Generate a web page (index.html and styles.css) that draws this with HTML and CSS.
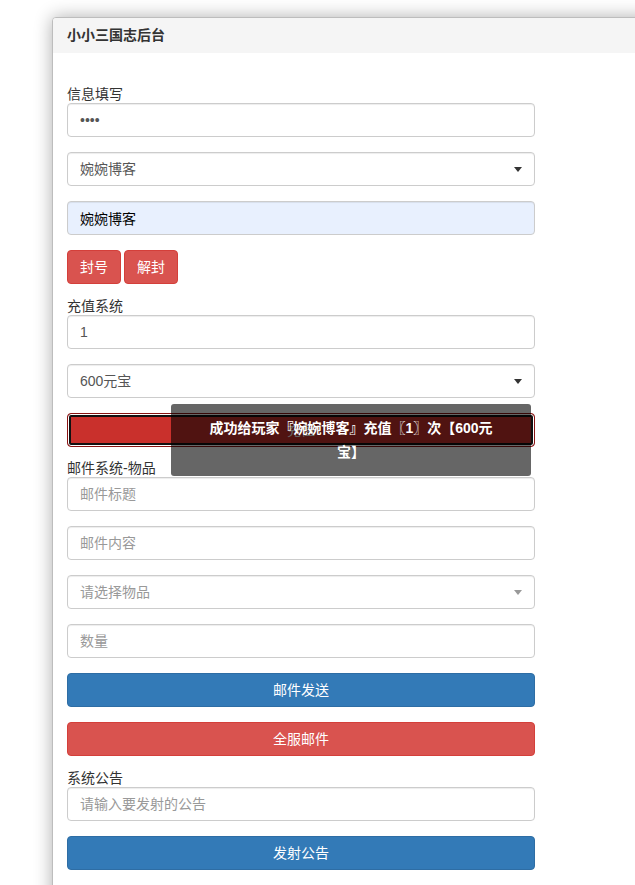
FILE: index.html
```html
<!DOCTYPE html>
<html lang="zh-CN">
<head>
<meta charset="utf-8">
<title>小小三国志后台</title>
<link rel="stylesheet" href="styles.css">
</head>
<body>
<div class="panel">
  <div class="panel-heading">小小三国志后台</div>
  <div class="panel-body">
    <label class="label">信息填写</label>
    <input class="control gap15" type="password" value="1234">
    <div class="select-wrap gap15">
      <select class="control"><option>婉婉博客</option></select>
    </div>
    <input class="control autofill gap15" type="text" value="婉婉博客">
    <div class="btn-row">
      <button class="btn danger">封号</button>
      <button class="btn danger">解封</button>
    </div>

    <label class="label">充值系统</label>
    <input class="control gap15" type="text" value="1">
    <div class="select-wrap gap15">
      <select class="control"><option>600元宝</option></select>
    </div>
    <div class="charge-wrap">
      <button class="btn danger block focused">充值</button>
      <div class="toast">成功给玩家『婉婉博客』充值〖1〗次【600元宝】</div>
    </div>

    <label class="label">邮件系统-物品</label>
    <input class="control gap15" type="text" placeholder="邮件标题">
    <input class="control gap15" type="text" placeholder="邮件内容">
    <div class="select-wrap placeholder gap15">
      <select class="control"><option>请选择物品</option></select>
    </div>
    <input class="control gap15" type="text" placeholder="数量">
    <button class="btn primary block gap15">邮件发送</button>
    <button class="btn danger block gap13">全服邮件</button>

    <label class="label">系统公告</label>
    <input class="control gap15" type="text" placeholder="请输入要发射的公告">
    <button class="btn primary block">发射公告</button>
  </div>
</div>
</body>
</html>
```

FILE: styles.css
```css
html, body {
  margin: 0;
  overflow: hidden;
  background: #fff;
}
body {
  padding: 17px 0 0 52px;
  font-family: "Liberation Sans", "Noto Sans CJK SC", sans-serif;
  font-size: 14px;
  color: #333;
}
.panel {
  width: 640px;
  border: 1px solid #bdbdbd;
  border-radius: 4px;
  background: #fff;
  box-shadow: 0 0 18px rgba(0, 0, 0, 0.32);
  height: 900px;
}
.panel-heading {
  background: #f5f5f5;
  height: 35px;
  line-height: 35px;
  padding: 0 14px;
  font-weight: bold;
  color: #333;
  border-radius: 3px 3px 0 0;
}
.panel-body {
  padding: 32px 0 0 14px;
  width: 468px;
  display: flex;
  flex-direction: column;
}
.label {
  display: block;
  line-height: 18px;
  height: 18px;
  color: #333;
}
.control {
  box-sizing: border-box;
  display: block;
  width: 468px;
  height: 34px;
  padding: 6px 12px;
  border: 1px solid #ccc;
  border-radius: 4px;
  font-family: "Liberation Sans", "Noto Sans CJK SC", sans-serif;
  font-size: 14px;
  color: #555;
  background: #fff;
  box-shadow: inset 0 1px 1px rgba(0, 0, 0, 0.075);
  outline: none;
  margin: 0;
}
.control::placeholder {
  color: #999;
}
.autofill {
  background: #e8f0fe;
  color: #000;
}
select.control {
  appearance: none;
  -webkit-appearance: none;
}
.select-wrap {
  position: relative;
}
.select-wrap::after {
  content: "";
  position: absolute;
  right: 13px;
  top: 15px;
  border-left: 4px solid transparent;
  border-right: 4px solid transparent;
  border-top: 5px solid #333;
}
.select-wrap.placeholder select {
  color: #999;
}
.select-wrap.placeholder::after {
  border-top-color: #999;
}
.btn-row {
  display: flex;
  gap: 3px;
  margin-bottom: 13px;
}
.btn {
  box-sizing: border-box;
  height: 34px;
  padding: 6px 12px;
  border: 1px solid transparent;
  border-radius: 4px;
  font-family: "Liberation Sans", "Noto Sans CJK SC", sans-serif;
  font-size: 14px;
  line-height: 20px;
  color: #fff;
  cursor: pointer;
  margin: 0;
}
.btn.block {
  display: block;
  width: 468px;
}
.danger {
  background: #d9534f;
  border-color: #d43f3a;
}
.primary {
  background: #337ab7;
  border-color: #2e6da4;
}
.charge-wrap {
  position: relative;
  margin-bottom: 12px;
}
.btn.focused {
  background: #c9302c;
  border: 1px solid #8a1414;
  box-shadow: inset 0 0 0 1px #fff, inset 0 0 0 3px #111;
}
.toast {
  position: absolute;
  left: 104px;
  top: -9px;
  width: 360px;
  box-sizing: border-box;
  padding: 12px 36px;
  line-height: 24px;
  background: rgba(0, 0, 0, 0.6);
  color: #fff;
  font-weight: bold;
  text-align: center;
  border-radius: 3px;
}
.panel-body .gap15 { margin-bottom: 15px; }
.panel-body .gap13 { margin-bottom: 13px; }
```
